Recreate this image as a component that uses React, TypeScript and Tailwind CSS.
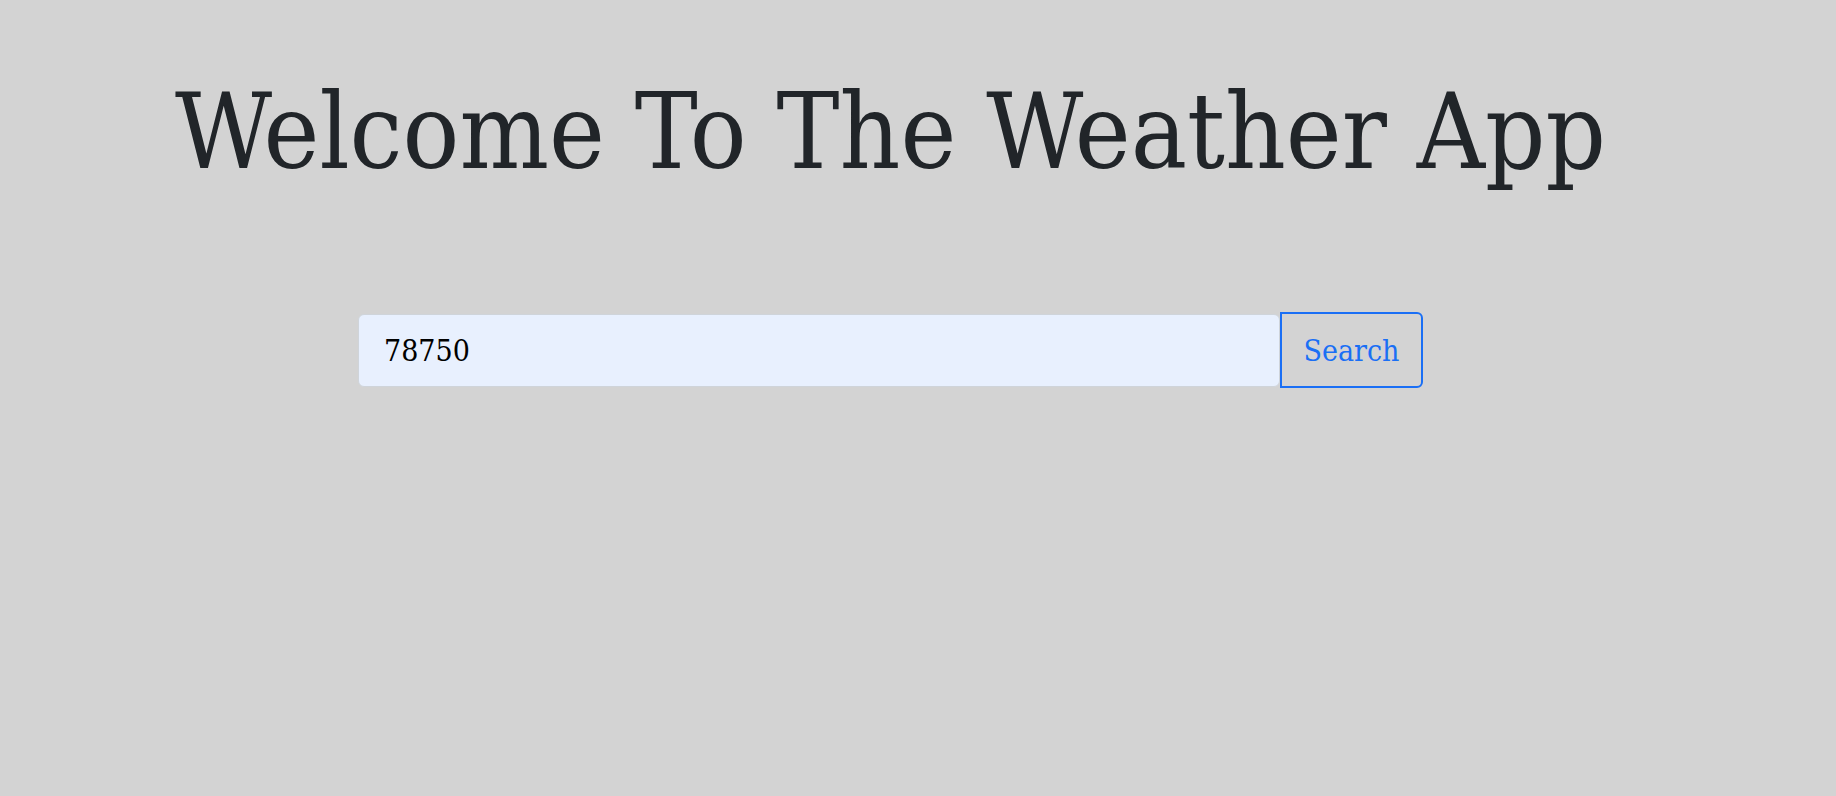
import React from "react";

export default function App() {
  return (
    <div className="min-h-[796px] w-full bg-[#d3d3d3] pr-[55px] font-['DejaVu_Serif_Condensed','DejaVu_Serif',serif] font-stretch-condensed">
      <div className="flex flex-col items-center">
        <h1 className="mt-[80px] text-[105px] leading-none text-[#212529] font-normal whitespace-nowrap">
          Welcome To The Weather App
        </h1>
        <form
          className="mt-[127px] flex items-center"
          onSubmit={(e) => e.preventDefault()}
        >
          <input
            type="text"
            defaultValue="78750"
            className="h-[73px] w-[922px] rounded-[6px] border border-[#cfd4da] bg-[#e8f0fe] pl-[25px] text-[30px] text-black outline-none font-['DejaVu_Serif_Condensed','DejaVu_Serif',serif] font-stretch-condensed"
          />
          <button
            type="submit"
            className="h-[76px] w-[143px] rounded-r-[6px] border-2 border-[#1a6ff5] text-[30px] text-[#1a6ff5] bg-transparent font-['DejaVu_Serif_Condensed','DejaVu_Serif',serif] font-stretch-condensed"
          >
            Search
          </button>
        </form>
      </div>
    </div>
  );
}
